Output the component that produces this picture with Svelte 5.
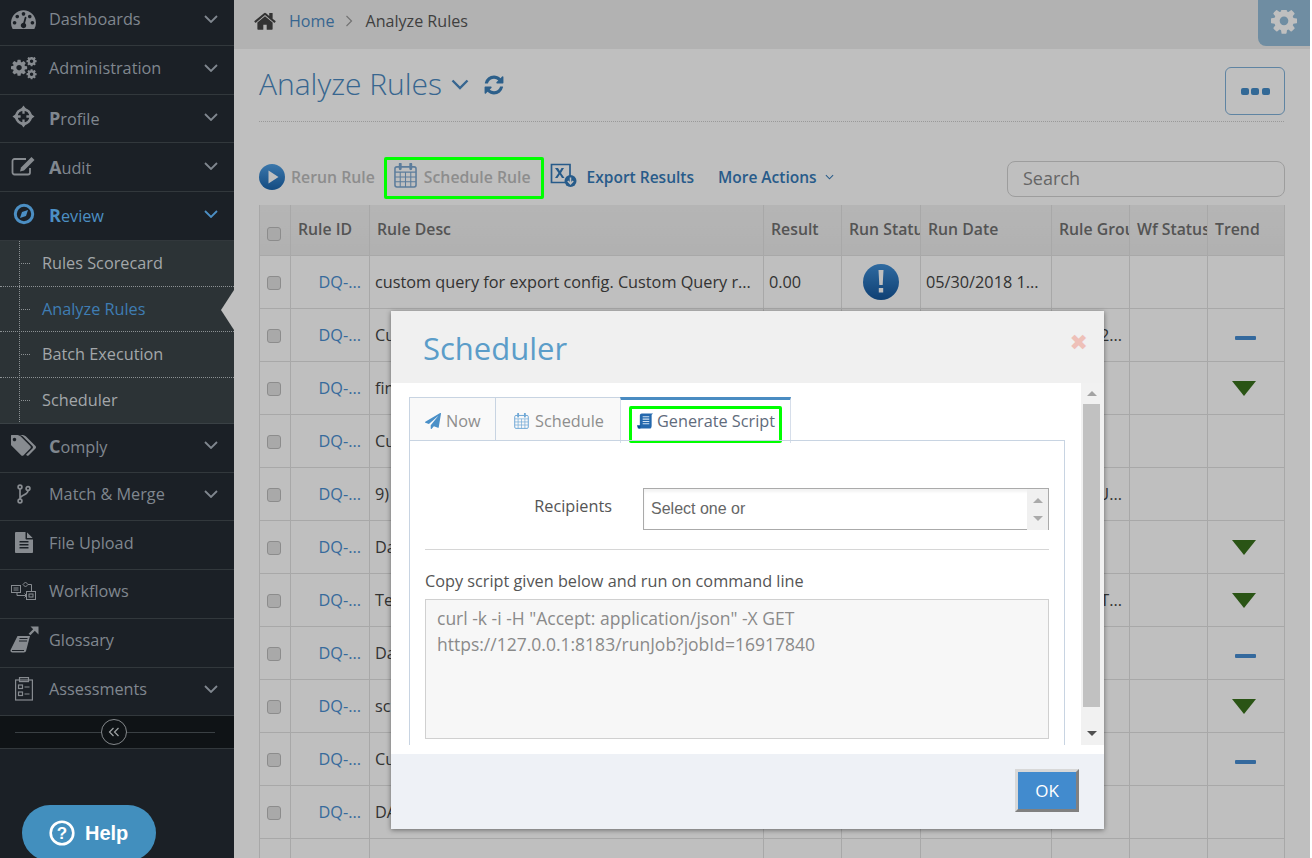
<script>
  const gear = "M1024 640q0-106-75-181t-181-75-181 75-75 181 75 181 181 75 181-75 75-181zm512-109v222q0 12-8 23t-20 13l-185 28q-19 54-39 91 35 50 107 138 10 12 10 25t-9 23q-27 37-99 108t-94 71q-12 0-26-9l-138-108q-44 23-91 38-16 136-29 186-7 28-36 28h-222q-14 0-24.5-8.5t-11.5-21.5l-28-184q-49-16-90-37l-141 107q-10 9-25 9-14 0-25-11-126-114-165-168-7-10-7-23 0-12 8-23 15-21 51-66.5t54-70.5q-27-50-41-99l-183-27q-13-2-21-12.5t-8-23.5v-222q0-12 8-23t19-13l186-28q14-46 39-92-40-57-107-138-10-12-10-24 0-10 9-23 26-36 98.5-107.5t94.5-71.5q13 0 26 10l138 107q44-23 91-38 16-136 29-186 7-28 36-28h222q14 0 24.5 8.5t11.5 21.5l28 184q49 16 90 37l142-107q9-9 24-9 13 0 25 10 129 119 165 170 7 8 7 22 0 12-8 23-15 21-51 66.5t-54 70.5q26 50 41 98l183 28q13 2 21 12.5t8 23.5z"

  const nav = [
    { label: 'Dashboards', icon: 'gauge', caret: true },
    { label: 'Administration', icon: 'gears', caret: true },
    { label: 'Profile', icon: 'target', caret: true, cap: true },
    { label: 'Audit', icon: 'edit', caret: true, cap: true },
    { label: 'Review', icon: 'compass', caret: true, cap: true, open: true },
    { label: 'Comply', icon: 'tags', caret: true, cap: true },
    { label: 'Match & Merge', icon: 'fork', caret: true },
    { label: 'File Upload', icon: 'file' },
    { label: 'Workflows', icon: 'flow' },
    { label: 'Glossary', icon: 'book' },
    { label: 'Assessments', icon: 'clipboard', caret: true }
  ]

  const subnav = ['Rules Scorecard', 'Analyze Rules', 'Batch Execution', 'Scheduler']

  const rows = [
    { desc: 'custom query for export config. Custom Query r...', result: '0.00', status: 'alert', date: '05/30/2018 1...' },
    { desc: 'Custom', group: '2...', trend: 'flat' },
    { desc: 'find', trend: 'down' },
    { desc: 'Custom' },
    { desc: '9) Rule', group: 'U...' },
    { desc: 'Data', trend: 'down' },
    { desc: 'Test', group: 'T...', trend: 'down' },
    { desc: 'Data', trend: 'flat' },
    { desc: 'scheduled', trend: 'down' },
    { desc: 'Custom', trend: 'flat' },
    { desc: 'DATA' },
    { desc: '', status: 'clip' }
  ]
</script>

{#snippet navIcon(name)}
  {#if name === 'gauge'}
    <svg class="nav-icon" viewBox="0 180 1792 1400" width="25" height="20"><path d="M384 1152q0-53-37.5-90.5t-90.5-37.5-90.5 37.5-37.5 90.5 37.5 90.5 90.5 37.5 90.5-37.5 37.5-90.5zm192-448q0-53-37.5-90.5t-90.5-37.5-90.5 37.5-37.5 90.5 37.5 90.5 90.5 37.5 90.5-37.5 37.5-90.5zm428 481l101-382q6-26-7.5-48.5t-38.5-29.5-48 6.5-30 39.5l-101 382q-60 5-107 43.5t-63 98.5q-20 77 20 146t117 89 146-20 89-117q16-60-6-117t-72-91zm660-33q0-53-37.5-90.5t-90.5-37.5-90.5 37.5-37.5 90.5 37.5 90.5 90.5 37.5 90.5-37.5 37.5-90.5zm-640-640q0-53-37.5-90.5t-90.5-37.5-90.5 37.5-37.5 90.5 37.5 90.5 90.5 37.5 90.5-37.5 37.5-90.5zm448 192q0-53-37.5-90.5t-90.5-37.5-90.5 37.5-37.5 90.5 37.5 90.5 90.5 37.5 90.5-37.5 37.5-90.5zm320 448q0 261-141 483-19 29-54 29h-1402q-35 0-54-29-141-221-141-483 0-182 71-348t191-286 286-191 348-71 348 71 286 191 191 286 71 348z"/></svg>
  {:else if name === 'gears'}
    <svg class="nav-icon" viewBox="0 0 26 23" width="26" height="23"><g transform="translate(0 4) scale(.0105)"><path d={gear}/></g><g transform="translate(15.5 0) scale(.0066)"><path d={gear}/></g><g transform="translate(15.5 13) scale(.0066)"><path d={gear}/></g></svg>
  {:else if name === 'target'}
    <svg class="nav-icon" viewBox="0 0 24 24" width="23" height="23"><circle cx="12" cy="12" r="7.500" fill="none" stroke="currentColor" stroke-width="2.800"/><path d="M12 .5l3 4-1.800 1v3.500h-2.400V5.500L9 4.500zM12 23.500l-3-4 1.800-1V15h2.400v3.500l1.800 1zM.5 12l4-3 1 1.800H9v2.400H5.500l-1 1.800zM23.500 12l-4 3-1-1.800H15v-2.400h3.500l1-1.800z"/></svg>
  {:else if name === 'edit'}
    <svg class="nav-icon" viewBox="0 0 25 20" width="25" height="20"><path d="M19 12v4.500a2 2 0 0 1-2 2H3.500a2 2 0 0 1-2-2V5a2 2 0 0 1 2-2H15" fill="none" stroke="currentColor" stroke-width="1.800"/><path d="M20.500 1l3 3-10.500 10.500-4 1 1-4z"/></svg>
  {:else if name === 'compass'}
    <svg class="nav-icon" viewBox="0 0 22 22" width="22" height="22"><circle cx="11" cy="11" r="8.700" fill="none" stroke="currentColor" stroke-width="3"/><path d="M15 7l-2 6-6 2 2-6z"/></svg>
  {:else if name === 'tags'}
    <svg class="nav-icon" viewBox="0 128 1835 1536" width="25" height="21"><path d="M384 448q0-53-37.500-90.500t-90.500-37.500-90.500 37.500-37.500 90.500 37.500 90.500 90.500 37.500 90.500-37.500 37.500-90.500zm1067 576q0 53-37 90l-491 492q-39 37-91 37-53 0-90-37l-715-716q-38-37-64.500-101t-26.500-117v-416q0-52 38-90t90-38h416q53 0 117 26.500t102 64.500l715 714q37 39 37 91zm384 0q0 53-37 90l-491 492q-39 37-91 37-36 0-59-14t-53-45l470-470q37-37 37-90 0-52-37-91l-715-714q-38-38-102-64.500t-117-26.500h224q53 0 117 26.500t102 64.500l715 714q37 39 37 91z"/></svg>
  {:else if name === 'fork'}
    <svg class="nav-icon line" viewBox="0 0 14 20" width="14" height="20" stroke="currentColor" stroke-width="1.700"><circle cx="3" cy="3" r="1.900"/><circle cx="3" cy="17" r="1.900"/><circle cx="11" cy="4.500" r="1.900"/><path d="M3 5v10M11 6.500c0 5-8 4-8 8.500"/></svg>
  {:else if name === 'file'}
    <svg class="nav-icon" viewBox="128 0 1536 1792" width="18" height="21"><path d="M1596 476q14 14 28 36h-472v-472q22 14 36 28zm-476 164h544v1056q0 40-28 68t-68 28h-1344q-40 0-68-28t-28-68v-1600q0-40 28-68t68-28h800v544q0 40 28 68t68 28zm160 736v-64q0-14-9-23t-23-9h-704q-14 0-23 9t-9 23v64q0 14 9 23t23 9h704q14 0 23-9t9-23zm0-256v-64q0-14-9-23t-23-9h-704q-14 0-23 9t-9 23v64q0 14 9 23t23 9h704q14 0 23-9t9-23zm0-256v-64q0-14-9-23t-23-9h-704q-14 0-23 9t-9 23v64q0 14 9 23t23 9h704q14 0 23-9t9-23z"/></svg>
  {:else if name === 'flow'}
    <svg class="nav-icon line" viewBox="0 0 25 20" width="25" height="20" stroke="currentColor" stroke-width="1"><rect x=".5" y="4.500" width="9" height="7"/><path d="M2.500 7h5M2.500 9h5M12 14.500h3M13.500 12.500l2 2-2 2M6 11.500v3h6"/><path d="M14.500 1l2.500 2.500-2.500 2.500-2.500-2.500zM17 3.500h3.500v7"/><rect x="15.500" y="10.500" width="9" height="8"/><rect x="18" y="13" width="4" height="3"/></svg>
  {:else if name === 'book'}
    <svg class="nav-icon book" viewBox="0 0 29 29" width="29" height="29"><path d="M7.500 10h12.500l-3.800 14.500c-.3 1.200-1 2-2.500 2H2.500c-1.500 0-2.300-1-2-2.500z"/><path d="M9.500 12.500h8M9 15h8" stroke="#1b2026" stroke-width="1"/><path d="M2 24.500h12" stroke="#1b2026" stroke-width="1"/><path d="M19.500 8.500l6-6" stroke="currentColor" stroke-width="2.400"/><path d="M20.500 .5H28.500v8z"/></svg>
  {:else if name === 'clipboard'}
    <svg class="nav-icon line" viewBox="0 0 18 24" width="18" height="24" stroke="currentColor" stroke-width="1.200"><rect x=".6" y="3" width="16.800" height="20"/><rect x="4.500" y=".6" width="9" height="4"/><rect x="3.500" y="8" width="4" height="3.500"/><rect x="3.500" y="15" width="4" height="3.500"/><path d="M9.500 10h5M9.500 17h5"/></svg>
  {/if}
{/snippet}

{#snippet calendar(w, h)}
  <svg viewBox="0 0 24 26" width={w} height={h} fill="none" stroke="currentColor"><rect x="1" y="4" width="22" height="21" rx="2" stroke-width="1.600"/><path d="M1 9.500h22M1 14.500h22M1 19.500h22M6.500 9.500V25M12 9.500V25M17.500 9.500V25" stroke-width="1.100"/><path d="M6.500 1v5M17.500 1v5" stroke-width="3" stroke-linecap="round"/></svg>
{/snippet}

<div class="app">
  <aside class="sidebar">
    <ul class="nav">
      {#each nav as item}
        <li class="nav-item" class:open={item.open}>
          <span class="icon-slot">{@render navIcon(item.icon)}</span>
          <span class="nav-label" class:cap={item.cap}>{item.label}</span>
          {#if item.caret}
            <svg class="caret" viewBox="0 0 14 8" width="14" height="8"><path d="M1 1l6 6 6-6" fill="none" stroke="currentColor" stroke-width="1.800"/></svg>
          {/if}
        </li>
        {#if item.open}
          <ul class="subnav">
            {#each subnav as sub}
              <li class="sub-item" class:current={sub === 'Analyze Rules'}>{sub}</li>
            {/each}
          </ul>
        {/if}
      {/each}
    </ul>
    <div class="collapse">
      <span class="collapse-btn">
        <svg viewBox="0 0 12 10" width="12" height="10"><path d="M5.500 1L1.500 5l4 4M10.500 1l-4 4 4 4" fill="none" stroke="currentColor" stroke-width="1.200"/></svg>
      </span>
    </div>
    <button class="help">
      <svg viewBox="0 0 26 26" width="26" height="26"><circle cx="13" cy="13" r="11.300" fill="none" stroke="#fff" stroke-width="2.600"/><text x="13" y="19" text-anchor="middle" class="help-q">?</text></svg>
      Help
    </button>
  </aside>

  <main class="main">
    <div class="breadcrumb">
      <svg class="home" viewBox="0 128 1664 1408" width="22" height="19"><path d="M1408 992v480q0 26-19 45t-45 19h-384v-384h-256v384h-384q-26 0-45-19t-19-45v-480q0-1 .5-3t.5-3l575-474 575 474q1 2 1 6zm223-69l-62 74q-8 9-21 11h-3q-13 0-21-7l-692-577-692 577q-12 8-24 7-13-2-21-11l-62-74q-8-10-7-23.500t11-21.500l719-599q32-26 76-26t76 26l244 204v-195q0-14 9-23t23-9h192q14 0 23 9t9 23v408l219 182q10 8 11 21.500t-7 23.500z"/></svg>
      <a class="crumb-link" href="#home">Home</a>
      <svg class="crumb-sep" viewBox="0 0 8 12" width="8" height="12"><path d="M1.500 1l5 5-5 5" fill="none" stroke="currentColor" stroke-width="1.200"/></svg>
      <span class="crumb-current">Analyze Rules</span>
      <span class="gear-tab">
        <svg viewBox="0 0 1536 1536" width="26" height="26"><path d={gear} fill="#fff"/></svg>
      </span>
    </div>

    <div class="page-head">
      <h1>Analyze Rules</h1>
      <svg class="title-caret" viewBox="0 0 18 11" width="18" height="11"><path d="M1.500 1.500L9 9l7.500-7.500" fill="none" stroke="currentColor" stroke-width="2.400"/></svg>
      <svg class="refresh" viewBox="0 0 1792 1792" width="22" height="22"><path d="M1639 1056q0 5-1 7-64 268-268 434.500t-478 166.500q-146 0-282.500-55t-243.500-157l-129 129q-19 19-45 19t-45-19-19-45v-448q0-26 19-45t45-19h448q26 0 45 19t19 45-19 45l-137 137q71 66 161 102t187 36q134 0 250-65t186-179q11-17 53-117 8-23 30-23h192q13 0 22.500 9.500t9.500 22.500zm25-800v448q0 26-19 45t-45 19h-448q-26 0-45-19t-19-45 19-45l138-138q-148-137-349-137-134 0-250 65t-186 179q-11 17-53 117-8 23-30 23h-199q-13 0-22.500-9.500t-9.500-22.500v-7q65-268 270-434.500t480-166.500q146 0 284 55.500t245 156.500l130-129q19-19 45-19t45 19 19 45z"/></svg>
      <button class="more-btn" aria-label="More"><i></i><i></i><i></i></button>
    </div>

    <div class="toolbar">
      <span class="tool disabled rerun">
        <svg viewBox="0 0 26 26" width="26" height="26">
          <defs><linearGradient id="playFill" x1="0" y1="0" x2="0" y2="1"><stop offset="0" stop-color="#4f9fe4"/><stop offset="1" stop-color="#1a64ad"/></linearGradient></defs>
          <circle cx="13" cy="13" r="13" fill="url(#playFill)"/><path d="M9.500 6.500l10 6.500-10 6.500z" fill="#fff"/>
        </svg>
        Rerun Rule
      </span>
      <span class="tool disabled schedule">
        <span class="cal">{@render calendar(23, 25)}</span>
        Schedule Rule
      </span>
      <span class="tool export">
        <svg viewBox="0 0 27 25" width="27" height="25"><path d="M20 16V1.500H1.500v18H15" fill="none" stroke="currentColor" stroke-width="1.700"/><path d="M5 5l3.500 5L5 15h2.500l2.300-3.500L12 15h2.500L11 10l3-5h-2.500L9.800 8 8 5z"/><circle cx="20.500" cy="18" r="6"/><path d="M20.500 14.500v6M17.800 18l2.700 2.800 2.700-2.800" fill="none" stroke="#fff" stroke-width="1.500"/></svg>
        Export Results
      </span>
      <span class="tool actions">
        More Actions
        <svg viewBox="0 0 10 6" width="9" height="6"><path d="M1 1l4 4 4-4" fill="none" stroke="currentColor" stroke-width="1.200"/></svg>
      </span>
      <input class="search" placeholder="Search" />
    </div>

    <table class="grid">
      <colgroup>
        <col style="width: 31px" /><col style="width: 79px" /><col style="width: 394px" /><col style="width: 78px" />
        <col style="width: 79px" /><col style="width: 131px" /><col style="width: 78px" /><col style="width: 78px" /><col style="width: 77px" />
      </colgroup>
      <thead>
        <tr>
          <th class="check"><span class="box"></span></th>
          <th>Rule ID</th><th>Rule Desc</th><th>Result</th><th>Run Status</th><th>Run Date</th><th>Rule Group</th><th>Wf Status</th><th>Trend</th>
        </tr>
      </thead>
      <tbody>
        {#each rows as row}
          <tr>
            <td class="check"><span class="box"></span></td>
            <td class="rule-id">DQ-...</td>
            <td>{row.desc}</td>
            <td>{row.result ?? ''}</td>
            <td class="center">
              {#if row.status === 'alert'}
                <svg class="alert" viewBox="0 0 36 36" width="36" height="36">
                  <defs><linearGradient id="alertFill" x1="0" y1="0" x2="0" y2="1"><stop offset="0" stop-color="#3f8ed6"/><stop offset="1" stop-color="#14569b"/></linearGradient></defs>
                  <circle cx="18" cy="18" r="18" fill="url(#alertFill)"/>
                  <path d="M15.500 6h5l-.8 15h-3.400zM15.800 24h4.400v4.500h-4.400z" fill="#fff"/>
                </svg>
              {:else if row.status === 'clip'}
                <svg class="clip" viewBox="0 0 26 16" width="26" height="16"><path d="M8 3H1.500v13M18 3h6.500v13" fill="none" stroke="#0a62ad" stroke-width="2.500"/><path d="M8 1.500h3.500V0h3v1.500H18V5H8z" fill="#0a62ad"/></svg>
              {/if}
            </td>
            <td>{row.date ?? ''}</td>
            <td class="group">{row.group ?? ''}</td>
            <td></td>
            <td class="center">
              {#if row.trend === 'flat'}
                <span class="trend-flat"></span>
              {:else if row.trend === 'down'}
                <span class="trend-down"></span>
              {/if}
            </td>
          </tr>
        {/each}
      </tbody>
    </table>

    <div class="scrim">
      <span class="mark-schedule"></span>

      <div class="modal">
        <div class="modal-head">
          <h2>Scheduler</h2>
          <span class="close">✖</span>
        </div>
        <div class="modal-body">
          <div class="scroll-content">
            <div class="tabs">
              <span class="tab first">
                <svg viewBox="0 0 1792 1792" width="16" height="16"><path d="M1764 11q33 24 27 64l-256 1536q-5 29-32 45-14 8-31 8-11 0-24-5l-453-185-242 295q-18 23-49 23-13 0-22-4-19-7-30.500-23.500t-11.500-36.500v-349l864-1059-1069 925-395-162q-37-14-40-55-2-40 32-59l1664-960q15-9 32-9 20 0 36 11z" fill="#4a90c8"/></svg>
                Now
              </span>
              <span class="tab second">
                <span class="tab-cal">{@render calendar(15, 16)}</span>
                Schedule
              </span>
              <span class="tab active">
                <span class="mark-tab">
                  <svg viewBox="0 0 18 18" width="17" height="18"><path d="M5 1h12l-1.500 1.500V14c0 2-1 3-2 3H1c1 0 2-1 2-3V3c0-1 1-2 2-2z" fill="#2468ad"/><path d="M6 4.500h7M6 7h7M6 9.500h7M6 12h7" stroke="#cfe2f3" stroke-width="1.100"/><path d="M0 13.500h3.500V17H1z" fill="#0a4f95"/></svg>
                  Generate Script
                </span>
              </span>
            </div>
            <div class="panel">
              <div class="recipients">
                <span class="recipients-label">Recipients</span>
                <div class="select">
                  <span class="select-text">Select one or</span>
                  <span class="spinner"><i class="up"></i><i class="down"></i></span>
                </div>
              </div>
              <hr />
              <p class="copy-label">Copy script given below and run on command line</p>
              <div class="script">curl -k -i -H "Accept: application/json" -X GET<br />https://127.0.0.1:8183/runJob?jobId=16917840</div>
            </div>
          </div>
          <div class="scrollbar">
            <i class="arrow-up"></i>
            <span class="thumb"></span>
            <i class="arrow-down"></i>
          </div>
        </div>
        <div class="modal-foot">
          <button class="ok">OK</button>
        </div>
      </div>
    </div>
  </main>
</div>

<style>
  :global(body) {
    background: #fff;
    font-family: "Open Sans", sans-serif;
  }

  .app {
    display: flex;
    width: 1310px;
    height: 858px;
    overflow: hidden;
  }

  /* sidebar */
  .sidebar {
    position: relative;
    flex: 0 0 234px;
    background: #1b2026;
    overflow: hidden;
  }

  .nav, .subnav {
    list-style: none;
    margin: 0;
    padding: 0;
  }

  .nav {
    margin-top: -3px;
  }

  .nav-item {
    display: flex;
    align-items: center;
    box-sizing: border-box;
    height: 48.75px;
    padding-bottom: 3px;
    border-bottom: 1px solid #32383c;
    color: #80878f;
    font-size: 16.25px;
  }

  .subnav ~ .nav-item {
    padding-bottom: 5px;
  }

  .nav-item.open {
    color: #4c8fc4;
  }

  .icon-slot {
    flex: 0 0 49px;
    display: flex;
    justify-content: center;
    padding-right: 1px;
    box-sizing: border-box;
    color: #878b90;
  }

  .nav-item.open .icon-slot {
    color: #4c8fc4;
  }

  .nav-icon {
    display: block;
    fill: currentColor;
    margin-left: -1px;
  }

  .nav-icon.line {
    fill: none;
  }

  .nav-icon.book {
    margin-left: 1px;
  }

  .nav-label {
    flex: 1;
  }

  .nav-label.cap {
    margin-top: 2px;
  }

  .nav-label.cap::first-letter {
    font-weight: 700;
    font-size: 18px;
  }

  .caret {
    margin-right: 16px;
  }

  .subnav {
    position: relative;
    background: #2c3336;
  }

  .subnav::before {
    content: '';
    position: absolute;
    left: 19px;
    top: 0;
    bottom: 0;
    border-left: 1px dotted #8c9194;
  }

  .sub-item {
    position: relative;
    box-sizing: border-box;
    height: 45.75px;
    line-height: 44px;
    padding-left: 42px;
    font-size: 16.25px;
    color: #a3a7aa;
    border-bottom: 1px dotted #8c9194;
  }

  .sub-item:last-child {
    border-bottom: 1px solid #3a4145;
  }

  .sub-item::before {
    content: '';
    position: absolute;
    left: 21px;
    width: 9px;
    top: 22px;
    border-top: 1px dotted #8c9194;
  }

  .sub-item.current {
    color: #3f7db3;
  }

  .sub-item.current::after {
    content: '';
    position: absolute;
    right: 0;
    top: 3px;
    border-style: solid;
    border-width: 20px 13px 20px 0;
    border-color: transparent #bfbfbf transparent transparent;
  }

  .collapse {
    position: relative;
    height: 32px;
    background: #0f1316;
    border-bottom: 1px solid #32383c;
    display: flex;
    align-items: center;
    justify-content: center;
  }

  .collapse::before {
    content: '';
    position: absolute;
    left: 15px;
    right: 19px;
    top: 16px;
    border-top: 1px solid #3a4044;
  }

  .collapse-btn {
    position: relative;
    display: flex;
    align-items: center;
    justify-content: center;
    width: 24px;
    height: 24px;
    margin-right: 6px;
    border: 1px solid #84888b;
    border-radius: 50%;
    background: #0f1316;
    color: #a0a3a5;
  }

  .help {
    position: absolute;
    left: 22px;
    top: 805px;
    display: flex;
    align-items: center;
    gap: 10px;
    box-sizing: border-box;
    width: 134px;
    height: 56px;
    padding: 0 0 0 27px;
    border: 0;
    border-radius: 28px;
    background: #428fbe;
    color: #fff;
    font: 700 20px "Liberation Sans", sans-serif;
  }

  .help-q {
    font: 700 17px "Liberation Sans", sans-serif;
    fill: #fff;
  }

  /* main page */
  .main {
    position: relative;
    flex: 1;
    box-sizing: border-box;
    padding: 0 26px 0 25px;
    min-width: 0;
    background: #fff;
    overflow: hidden;
  }

  .breadcrumb {
    position: relative;
    display: flex;
    align-items: center;
    box-sizing: border-box;
    height: 49px;
    margin: 0 -26px 0 -25px;
    padding: 0 0 8px 20px;
    background: #eee;
    font-size: 16.1px;
    color: #555;
  }

  .home {
    fill: #444;
    margin-right: 13px;
  }

  .crumb-link {
    color: #4a88c0;
    text-decoration: none;
  }

  .crumb-sep {
    margin: 0 12px 0 11px;
    color: #999;
  }

  .gear-tab {
    position: absolute;
    right: 0;
    top: 0;
    display: flex;
    align-items: center;
    justify-content: center;
    width: 52px;
    height: 46px;
    background: #94bdd9;
    border-bottom-left-radius: 8px;
  }

  .page-head {
    position: relative;
    display: flex;
    align-items: center;
    height: 72px;
    border-bottom: 1px dotted #ccc;
    color: #4a88c0;
  }

  h1 {
    margin: 0 0 4px;
    font-size: 30px;
    font-weight: 300;
    color: #4a88c0;
  }

  .title-caret {
    margin: 0 0 2px 9px;
  }

  .refresh {
    margin: 0 0 0 14px;
    fill: #3b7fb9;
  }

  .more-btn {
    position: absolute;
    right: -1px;
    top: 18px;
    display: flex;
    align-items: center;
    justify-content: center;
    gap: 2.500px;
    box-sizing: border-box;
    width: 60px;
    height: 48px;
    border: 1px solid #7fb0d8;
    border-radius: 6px;
    background: transparent;
  }

  .more-btn i {
    width: 8px;
    height: 7px;
    border-radius: 2px;
    background: #448cc9;
  }

  .toolbar {
    position: relative;
    display: flex;
    align-items: center;
    height: 83px;
    font-size: 15.5px;
    font-weight: 600;
  }

  .tool {
    display: flex;
    align-items: center;
    margin-top: 27px;
    white-space: nowrap;
  }

  .tool.disabled {
    font-size: 15.8px;
    color: #bcbcbc;
  }

  .rerun {
    gap: 6px;
  }

  .schedule {
    margin-left: 9px;
    padding-left: 10px;
    gap: 7px;
  }

  .cal {
    display: flex;
    color: #7ba6cf;
    margin-top: -3px;
  }

  .export {
    margin-left: 19px;
    gap: 10px;
    color: #357ab8;
  }

  .export svg {
    fill: #357ab8;
    margin-top: -4px;
  }

  .actions {
    margin-left: 24px;
    gap: 8px;
    color: #357ab8;
  }

  .search {
    position: absolute;
    right: -1px;
    top: 39px;
    box-sizing: border-box;
    width: 278px;
    height: 36px;
    padding: 0 15px 2px;
    border: 1px solid #d2d2d2;
    border-radius: 8px;
    background: transparent;
    font: 400 18px "Open Sans", sans-serif;
  }

  .search::placeholder {
    color: #888;
    opacity: 1;
  }

  .grid {
    width: 1025px;
    table-layout: fixed;
    border-collapse: collapse;
    font-size: 16.25px;
    color: #444;
  }

  .grid th {
    height: 50px;
    padding: 0 7px 2px;
    box-sizing: border-box;
    text-align: left;
    font-size: 15.8px;
    font-weight: 600;
    white-space: nowrap;
    overflow: hidden;
    color: #707070;
    background: linear-gradient(#f2f2f2, #ececec);
    border-left: 1px solid #e0e0e0;
    border-right: 1px solid #e0e0e0;
  }

  .grid td {
    height: 53px;
    padding: 0 5px;
    box-sizing: border-box;
    white-space: nowrap;
    overflow: hidden;
    border: 1px solid #e0e0e0;
  }

  .grid .check {
    padding: 0 2px 0 0;
    text-align: center;
  }

  .box {
    display: inline-block;
    width: 14px;
    height: 14px;
    margin-top: -1px;
    box-sizing: border-box;
    vertical-align: middle;
    border: 1px solid #bbb;
    border-radius: 3px;
    background: #e2e2e2;
  }

  th .box {
    margin-top: 5px;
  }

  .grid .rule-id {
    text-align: right;
    padding-right: 8px;
    color: #4a8ed0;
  }

  .grid .center {
    padding: 0;
    text-align: center;
  }

  .grid .group {
    text-align: right;
    padding-right: 7px;
  }

  .alert {
    display: block;
    margin: 0 auto;
  }

  .clip {
    display: block;
    margin: 6px auto 0;
  }

  .trend-flat {
    display: block;
    width: 21px;
    height: 4px;
    margin: 6px 0 0 27px;
    border-radius: 1px;
    background: #468cd2;
  }

  .trend-down {
    display: block;
    width: 0;
    margin: 2px 0 0 24px;
    border-style: solid;
    border-width: 15px 12px 0;
    border-color: #39711d transparent transparent;
  }

  /* overlay and modal */
  .scrim {
    position: absolute;
    inset: 0;
    background: rgba(0, 0, 0, 0.25);
  }

  .mark-schedule {
    position: absolute;
    left: 150px;
    top: 157px;
    width: 160px;
    height: 42px;
    box-sizing: border-box;
    border: 3px solid #00ff00;
    border-radius: 2px;
  }

  .modal {
    position: absolute;
    left: 157px;
    top: 311px;
    width: 713px;
    height: 518px;
    display: flex;
    flex-direction: column;
    background: #fff;
    box-shadow: 0 1px 5px rgba(0, 0, 0, 0.45);
  }

  .modal-head {
    position: relative;
    flex: 0 0 72px;
    box-sizing: border-box;
    padding: 15px 32px 0;
    background: #f0f0f0;
  }

  h2 {
    margin: 0;
    font-size: 31px;
    line-height: 44px;
    font-weight: 400;
    color: #5b9dc9;
  }

  .close {
    position: absolute;
    right: 16px;
    top: 19px;
    font: 700 22px "DejaVu Sans", sans-serif;
    color: #eec0b8;
  }

  .modal-body {
    display: flex;
    flex: 0 0 362px;
    padding-bottom: 9px;
    background: #fff;
    box-sizing: content-box;
  }

  .scroll-content {
    flex: 1;
    min-width: 0;
    padding: 14px 16px 0 18px;
    overflow: hidden;
    box-sizing: border-box;
    height: 362px;
  }

  .scrollbar {
    position: relative;
    flex: 0 0 23px;
    height: 362px;
    background: #f1f1f1;
  }

  .thumb {
    position: absolute;
    left: 2px;
    top: 21px;
    width: 17px;
    height: 303px;
    background: #c1c1c1;
  }

  .arrow-up, .arrow-down, .spinner i {
    position: absolute;
    width: 0;
    border-style: solid;
    border-color: transparent;
  }

  .arrow-up {
    left: 6px;
    top: 8px;
    border-width: 0 5px 5px;
    border-bottom-color: #a3a3a3;
  }

  .arrow-down {
    left: 6px;
    top: 348px;
    border-width: 5px 5px 0;
    border-top-color: #505050;
  }

  .tabs {
    display: flex;
    align-items: flex-end;
    height: 45px;
    color: #8e8e8e;
    font-size: 16.25px;
  }

  .tab {
    display: flex;
    align-items: center;
    box-sizing: border-box;
    height: 44px;
    padding-top: 2px;
    border: 1px solid #c8d4e2;
    border-bottom: 0;
    background: #f9f9f9;
    margin-bottom: 1px;
  }

  .first {
    width: 87px;
    padding-left: 15px;
    gap: 5px;
  }

  .second {
    width: 125px;
    border-left: 0;
    padding-left: 18px;
    gap: 6px;
  }

  .tab-cal {
    display: flex;
    color: #6fa8d6;
  }

  .active {
    position: relative;
    width: 171px;
    height: 46px;
    margin-bottom: -1px;
    margin-left: -1px;
    border-top: 3px solid #4a8cc2;
    border-left-color: #d6deea;
    border-right-color: #d6deea;
    background: #fff;
    padding: 6px 0 0 8px;
    align-items: flex-start;
    color: #5f6b7c;
  }

  .mark-tab {
    display: flex;
    align-items: center;
    gap: 3px;
    box-sizing: border-box;
    width: 153px;
    height: 37px;
    padding: 0 0 7px 5px;
    border: 3px solid #00ff00;
    border-radius: 2px;
  }

  .panel {
    position: relative;
    box-sizing: border-box;
    width: 656px;
    height: 320px;
    padding: 47px 15px 0;
    border: 1px solid #c8d4e2;
    margin-top: -2px;
  }

  .recipients {
    display: flex;
    align-items: center;
    gap: 31px;
    font-size: 16.25px;
    color: #555;
  }

  .recipients-label {
    width: 187px;
    text-align: right;
    margin-top: -6px;
  }

  .select {
    position: relative;
    box-sizing: border-box;
    width: 406px;
    height: 42px;
    border: 1px solid #aaa;
    box-shadow: inset 0 3px 3px #f3f3f3;
    display: flex;
    align-items: center;
    padding-left: 7px;
  }

  .select-text {
    font: 16px "Liberation Sans", sans-serif;
    color: #666;
  }

  .spinner {
    position: absolute;
    right: 0;
    top: 0;
    bottom: -1px;
    width: 21px;
    background: #f0f0f0;
  }

  .spinner .up {
    left: 6px;
    top: 9px;
    border-width: 0 5px 5px;
    border-bottom-color: #aaa;
  }

  .spinner .down {
    left: 6px;
    top: 27px;
    border-width: 5px 5px 0;
    border-top-color: #aaa;
  }

  hr {
    width: 624px;
    margin: 19px 0 0;
    border: 0;
    border-top: 1px solid #d6d6d6;
  }

  .copy-label {
    margin: 20px 0 7px;
    font-size: 16.25px;
    line-height: 22px;
    color: #555;
  }

  .script {
    box-sizing: border-box;
    width: 624px;
    height: 140px;
    padding: 6px 11px;
    border: 1px solid #d0d0d0;
    background: #f7f7f7;
    font-size: 17.5px;
    line-height: 25.5px;
    color: #8a8a8a;
    white-space: nowrap;
  }

  .modal-foot {
    flex: 1;
    display: flex;
    justify-content: flex-end;
    align-items: flex-start;
    padding: 15px 25px 0 0;
    background: #eef1f6;
  }

  .ok {
    width: 64px;
    height: 43px;
    padding: 0;
    border: 3px solid;
    border-color: #d8d8d8 #808080 #808080 #d8d8d8;
    background: #428bce;
    color: #fff;
    font: 400 17px "Open Sans", sans-serif;
  }
</style>
